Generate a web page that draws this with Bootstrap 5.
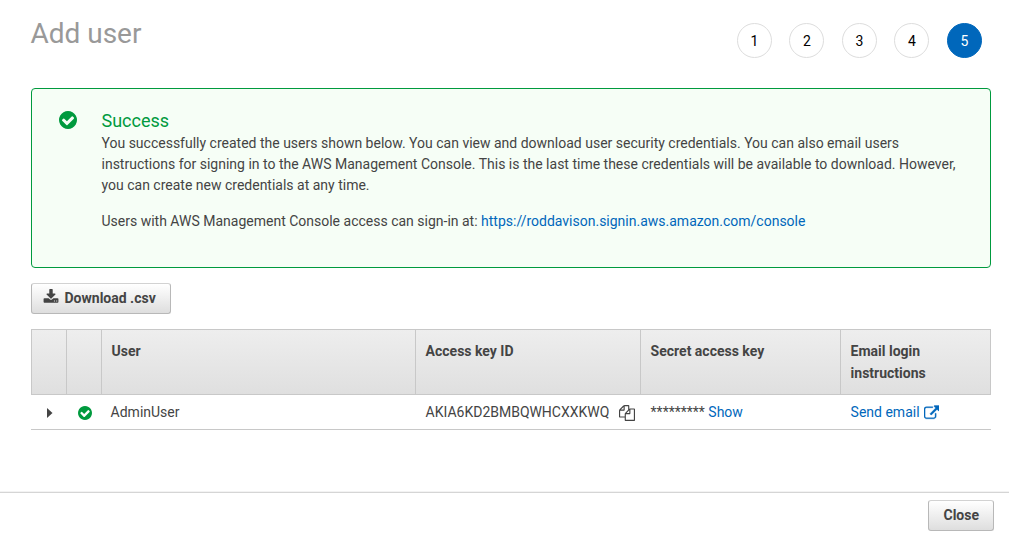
<!DOCTYPE html>
<html lang="en">
<head>
<meta charset="utf-8">
<meta name="viewport" content="width=device-width, initial-scale=1">
<title>Add user</title>
<link href="https://cdn.jsdelivr.net/npm/bootstrap@5.3.0/dist/css/bootstrap.min.css" rel="stylesheet">
<style>
body{font-family:Roboto,sans-serif;font-size:14px;line-height:21px;color:#444;height:533px;overflow:hidden}
a{color:#0067bb;text-decoration:none}
svg{fill:currentColor;display:block;flex:none}
.page-main{padding:0 18px 0 31px;height:492px}
.page-head{height:88px}
.page-title{font-size:28px;line-height:34px;color:#999;font-weight:400;margin:17px 0 0 -.6px}
.steps{gap:17.5px;margin:23px 9.2px 0 0}
.step{width:35px;height:35px;border:1px solid #ddd;color:#000;line-height:35px}
.step.current{background:#0067bb;border-color:#0067bb;color:#fff}
.notice{height:180px;border:1px solid #009a3e;border-radius:4px;background:#f6fef6;padding:21px 28px 0 27px}
.ok{color:#009a3e}
.notice-icon{margin-top:1px}
.notice-title{font-size:18px;line-height:22px;font-weight:400;margin:0 0 1px}
.notice-text{margin-left:24.5px}
.signin{margin:15px 0 0}
.aws-btn{--bs-btn-font-size:14px;--bs-btn-font-weight:700;--bs-btn-color:#444;--bs-btn-hover-color:#444;height:31px;line-height:21px;padding:4px 14px;border:1px solid #b8b8b8;border-top-color:#d2d2d2;border-radius:3px;background:linear-gradient(#fff,#dedede)}
.download{margin-top:15px;padding-left:12px}
.download svg{margin:1px 5.5px 0 -1px}
.users{width:960px;table-layout:fixed;margin:15px 0 0;--bs-table-bg:transparent;--bs-table-color:#444;border-color:#c8c8c8;border-collapse:separate;border-spacing:0}
.users thead{background:linear-gradient(#eee,#dfdfdf)}
.users th{height:66px;padding:10px 9.6px;line-height:22px;border:solid #c8c8c8;border-width:1px 0 1px 1px;vertical-align:top}
.users th:last-child{border-right-width:1px}
.users td{height:35px;padding:0 10.6px;line-height:34px;border-bottom:1px solid #c8c8c8;white-space:nowrap}
.users td.narrow{padding:0 10px}
.users td.user-name{padding-left:9.6px}
.caret{margin:2px 0 0 6px}
.row-ok{margin:2px 0 0 2px}
.copy{margin:2px 0 0 9.4px}
.external{margin:2px 0 0 4.4px}
.page-foot{height:41px;border-top:1px solid #d5d5d5;padding:7px 15px 0;box-shadow:0 -1px 0 #f3f3f3}
</style>
</head>
<body>
<svg class="d-none" xmlns="http://www.w3.org/2000/svg">
<symbol id="check" viewBox="128 128 1536 1536"><path d="M1412 734q0-28-18-46l-91-90q-19-19-45-19t-45 19l-408 407-226-226q-19-19-45-19t-45 19l-91 90q-18 18-18 46 0 27 18 45l362 362q19 19 45 19 27 0 46-19l543-543q18-18 18-45zm252 162q0 209-103 385.5t-279.5 279.5-385.5 103-385.5-103-279.5-279.5-103-385.5 103-385.5 279.5-279.5 385.5-103 385.5 103 279.5 279.5 103 385.5z"/></symbol>
</svg>
<main class="page-main">
  <header class="page-head d-flex justify-content-between align-items-start">
    <h1 class="page-title">Add user</h1>
    <div class="steps d-flex text-center">
      <div class="step rounded-circle">1</div>
      <div class="step rounded-circle">2</div>
      <div class="step rounded-circle">3</div>
      <div class="step rounded-circle">4</div>
      <div class="step current rounded-circle">5</div>
    </div>
  </header>
  <section class="notice d-flex align-items-start">
    <svg class="ok notice-icon" width="18" height="18"><use href="#check"/></svg>
    <div class="notice-text">
      <h2 class="notice-title ok">Success</h2>
      <p class="mb-0">You successfully created the users shown below. You can view and download user security credentials. You can also email users instructions for signing in to the AWS Management Console. This is the last time these credentials will be available to download. However, you can create new credentials at any time.</p>
      <p class="signin">Users with AWS Management Console access can sign-in at: <a href="#">https://roddavison.signin.aws.amazon.com/console</a></p>
    </div>
  </section>
  <button class="btn aws-btn download d-flex"><svg width="16" height="16" viewBox="0 0 1792 1792"><path d="M1344 1344q0-26-19-45t-45-19-45 19-19 45 19 45 45 19 45-19 19-45zm256 0q0-26-19-45t-45-19-45 19-19 45 19 45 45 19 45-19 19-45zm128-224v320q0 40-28 68t-68 28h-1472q-40 0-68-28t-28-68v-320q0-40 28-68t68-28h465l135 136q58 56 136 56t136-56l136-136h464q40 0 68 28t28 68zm-325-569q17 41-14 70l-448 448q-18 19-45 19t-45-19l-448-448q-31-29-14-70 17-39 59-39h256v-448q0-26 19-45t45-19h256q26 0 45 19t19 45v448h256q42 0 59 39z"/></svg>Download .csv</button>
  <table class="table users">
    <colgroup><col style="width:35px"><col style="width:35px"><col style="width:314px"><col style="width:225px"><col style="width:200px"><col style="width:151px"></colgroup>
    <thead><tr><th></th><th></th><th>User</th><th>Access key ID</th><th>Secret access key</th><th>Email login instructions</th></tr></thead>
    <tbody><tr>
      <td class="narrow align-middle"><svg class="caret" width="6" height="10" viewBox="0 0 6 10"><path d="M0 0L5.5 5 0 10z"/></svg></td>
      <td class="narrow align-middle"><svg class="ok row-ok" width="14" height="14"><use href="#check"/></svg></td>
      <td class="user-name">AdminUser</td>
      <td><div class="d-flex align-items-center">AKIA6KD2BMBQWHCXXKWQ<svg class="copy" width="16" height="16" viewBox="0 0 1792 1792"><path d="M1696 384q40 0 68 28t28 68v1216q0 40-28 68t-68 28h-960q-40 0-68-28t-28-68v-288h-544q-40 0-68-28t-28-68v-672q0-40 20-88t48-76l408-408q28-28 76-48t88-20h416q40 0 68 28t28 68v328q68-40 128-40h416zm-544 213l-299 299h299v-299zm-640-384l-299 299h299v-299zm196 647l316-316v-416h-384v416q0 40-28 68t-68 28h-416v640h512v-256q0-40 20-88t48-76zm956 804v-1152h-384v416q0 40-28 68t-68 28h-416v640h896z"/></svg></div></td>
      <td>********* <a href="#">Show</a></td>
      <td><a href="#" class="d-flex align-items-center">Send email<svg class="external" width="15.5" height="15.5" viewBox="64 0 1792 1792" stroke="currentColor" stroke-width="40"><path d="M1472 989v320q0 119-84.500 203.500t-203.500 84.500h-832q-119 0-203.500-84.500t-84.500-203.500v-832q0-119 84.500-203.500t203.500-84.500h704q14 0 23 9t9 23v64q0 14-9 23t-23 9h-704q-66 0-113 47t-47 113v832q0 66 47 113t113 47h832q66 0 113-47t47-113v-320q0-14 9-23t23-9h64q14 0 23 9t9 23zm384-864v512q0 26-19 45t-45 19-45-19l-176-176-652 652q-10 10-23 10t-23-10l-114-114q-10-10-10-23t10-23l652-652-176-176q-19-19-19-45t19-45 45-19h512q26 0 45 19t19 45z"/></svg></a></td>
    </tr></tbody>
  </table>
</main>
<footer class="page-foot d-flex justify-content-end align-items-start">
  <button class="btn aws-btn">Close</button>
</footer>
<script src="https://cdn.jsdelivr.net/npm/bootstrap@5.3.0/dist/js/bootstrap.bundle.min.js"></script>
</body>
</html>
